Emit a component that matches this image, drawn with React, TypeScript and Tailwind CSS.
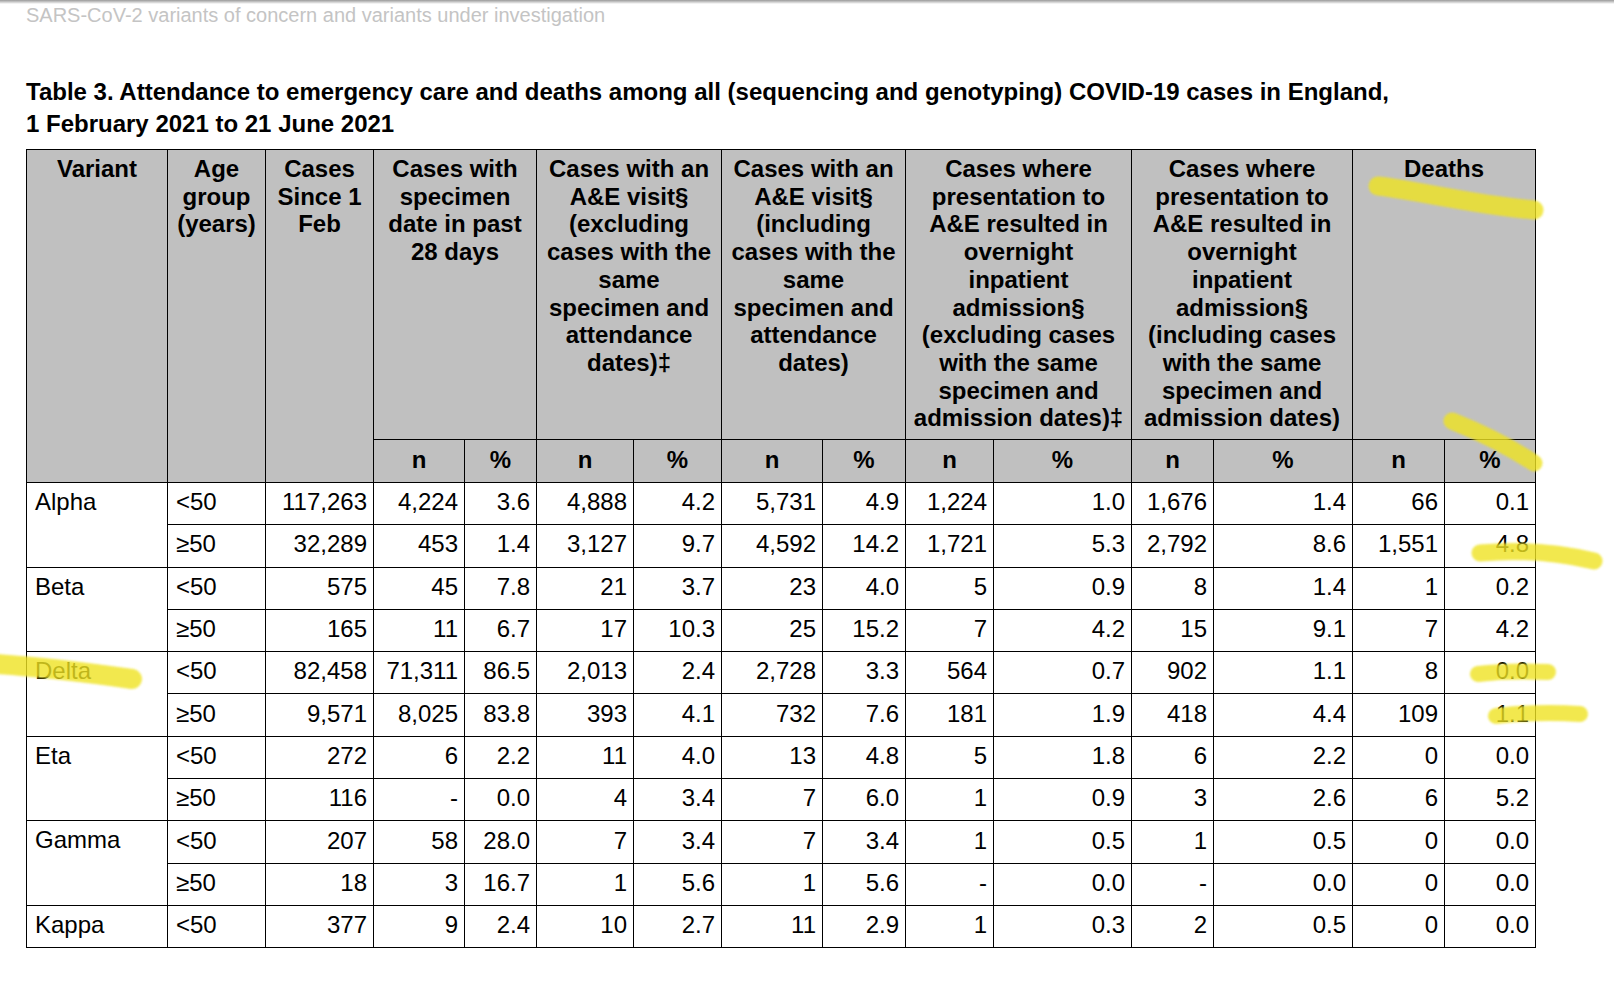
import React from 'react';

type Row = {
  variant?: string;
  span?: number;
  age: string;
  cells: string[];
};

const rows: Row[] = [
  { variant: 'Alpha', span: 2, age: '<50', cells: ['117,263', '4,224', '3.6', '4,888', '4.2', '5,731', '4.9', '1,224', '1.0', '1,676', '1.4', '66', '0.1'] },
  { age: '≥50', cells: ['32,289', '453', '1.4', '3,127', '9.7', '4,592', '14.2', '1,721', '5.3', '2,792', '8.6', '1,551', '4.8'] },
  { variant: 'Beta', span: 2, age: '<50', cells: ['575', '45', '7.8', '21', '3.7', '23', '4.0', '5', '0.9', '8', '1.4', '1', '0.2'] },
  { age: '≥50', cells: ['165', '11', '6.7', '17', '10.3', '25', '15.2', '7', '4.2', '15', '9.1', '7', '4.2'] },
  { variant: 'Delta', span: 2, age: '<50', cells: ['82,458', '71,311', '86.5', '2,013', '2.4', '2,728', '3.3', '564', '0.7', '902', '1.1', '8', '0.0'] },
  { age: '≥50', cells: ['9,571', '8,025', '83.8', '393', '4.1', '732', '7.6', '181', '1.9', '418', '4.4', '109', '1.1'] },
  { variant: 'Eta', span: 2, age: '<50', cells: ['272', '6', '2.2', '11', '4.0', '13', '4.8', '5', '1.8', '6', '2.2', '0', '0.0'] },
  { age: '≥50', cells: ['116', '-', '0.0', '4', '3.4', '7', '6.0', '1', '0.9', '3', '2.6', '6', '5.2'] },
  { variant: 'Gamma', span: 2, age: '<50', cells: ['207', '58', '28.0', '7', '3.4', '7', '3.4', '1', '0.5', '1', '0.5', '0', '0.0'] },
  { age: '≥50', cells: ['18', '3', '16.7', '1', '5.6', '1', '5.6', '-', '0.0', '-', '0.0', '0', '0.0'] },
  { variant: 'Kappa', span: 1, age: '<50', cells: ['377', '9', '2.4', '10', '2.7', '11', '2.9', '1', '0.3', '2', '0.5', '0', '0.0'] },
];

const colWidths = [141, 98, 108, 91, 72, 97, 88, 101, 83, 88, 138, 82, 139, 92, 91];

const groups: string[][] = [
  ['Cases with', 'specimen', 'date in past', '28 days'],
  ['Cases with an', 'A&E visit§', '(excluding', 'cases with the', 'same', 'specimen and', 'attendance', 'dates)‡'],
  ['Cases with an', 'A&E visit§', '(including', 'cases with the', 'same', 'specimen and', 'attendance', 'dates)'],
  ['Cases where', 'presentation to', 'A&E resulted in', 'overnight', 'inpatient', 'admission§', '(excluding cases', 'with the same', 'specimen and', 'admission dates)‡'],
  ['Cases where', 'presentation to', 'A&E resulted in', 'overnight', 'inpatient', 'admission§', '(including cases', 'with the same', 'specimen and', 'admission dates)'],
  ['Deaths'],
];

// marker strokes: [path, width]
const strokes: [string, number][] = [
  ['M1378 186 C1420 191 1470 204 1534 210', 19],
  ['M1452 421 C1482 433 1510 447 1534 463', 17],
  ['M1480 553 C1512 550 1552 551 1594 561', 17],
  ['M-4 664 C40 667 90 673 132 679', 20],
  ['M1478 674 C1502 671 1525 671 1548 672', 16],
  ['M1496 716 C1522 713 1552 712 1580 714', 16],
];

const th = 'border-[1.5px] border-black bg-[#c0c0c0] font-bold text-center align-top pt-[5px] leading-[27.7px] whitespace-nowrap';
const sub = 'border-[1.5px] border-black bg-[#c0c0c0] font-bold text-center align-middle leading-[27px] pb-[4px]';
const td = 'border-[1.5px] border-black px-[8px] align-middle leading-[27px] pb-[4px]';

function Lines({ lines }: { lines: string[] }) {
  return (
    <>
      {lines.map((l, i) => (
        <React.Fragment key={i}>
          {i > 0 && <br />}
          {l}
        </React.Fragment>
      ))}
    </>
  );
}

function Highlights() {
  // marker strokes drawn over the scan
  return (
    <svg className="absolute inset-0 pointer-events-none" width="1614" height="988">
      <defs>
        <filter id="soft">
          <feGaussianBlur stdDeviation="1.3" />
        </filter>
      </defs>
      <g stroke="#efe324" strokeLinecap="round" fill="none" opacity="0.8" filter="url(#soft)">
        {strokes.map(([d, w], i) => (
          <path key={i} d={d} strokeWidth={w} />
        ))}
      </g>
    </svg>
  );
}

export default function App() {
  return (
    <div className="relative w-[1614px] h-[988px] bg-white text-black overflow-hidden font-['Liberation_Sans',Arial,sans-serif]">
      <div className="h-[4px] bg-linear-to-b from-[#9a9a9a] to-white" />
      <div className="pl-[26px] text-[20px] leading-[22px] text-[#c4c4c4]">
        SARS-CoV-2 variants of concern and variants under investigation
      </div>

      <div className="pl-[26px] mt-[50px] text-[24px] leading-[32px] font-bold whitespace-nowrap">
        Table 3. Attendance to emergency care and deaths among all (sequencing and genotyping) COVID-19 cases in England,
        <br />1 February 2021 to 21 June 2021
      </div>

      <div className="pl-[26px] mt-[9px]">
        <table className="border-collapse table-fixed w-[1509px] text-[24px]">
          <colgroup>
            {colWidths.map((w, i) => (
              <col key={i} style={{ width: w }} />
            ))}
          </colgroup>
          <thead>
            <tr className="h-[290px]">
              <th rowSpan={2} className={th}>Variant</th>
              <th rowSpan={2} className={th}><Lines lines={['Age', 'group', '(years)']} /></th>
              <th rowSpan={2} className={th}><Lines lines={['Cases', 'Since 1', 'Feb']} /></th>
              {groups.map((g, i) => (
                <th key={i} colSpan={2} className={th}><Lines lines={g} /></th>
              ))}
            </tr>
            <tr className="h-[43px]">
              {groups.flatMap((_, i) => [
                <th key={`n${i}`} className={sub}>n</th>,
                <th key={`p${i}`} className={sub}>%</th>,
              ])}
            </tr>
          </thead>
          <tbody>
            {rows.map((r, i) => (
              <tr key={i} className="h-[42.3px]">
                {r.variant && (
                  <td rowSpan={r.span} className={`${td} align-top pt-[5px]`}>{r.variant}</td>
                )}
                <td className={td}>{r.age}</td>
                {r.cells.map((c, j) => (
                  <td key={j} className={`${td} text-right pr-[6px]`}>{c}</td>
                ))}
              </tr>
            ))}
          </tbody>
        </table>
      </div>

      <Highlights />
    </div>
  );
}
